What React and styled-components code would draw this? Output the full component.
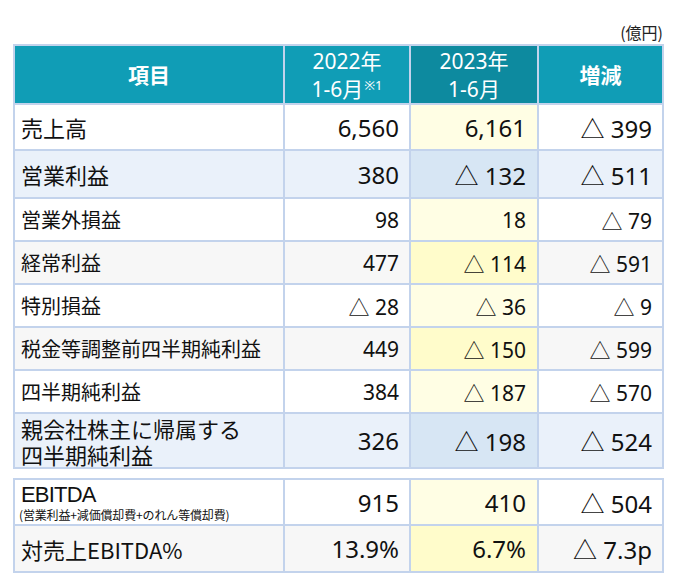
import React from "react";
import styled, { createGlobalStyle } from "styled-components";

const Global = createGlobalStyle`
  html, body { margin: 0; padding: 0; background: #fff; }
  body { font-family: "Noto Sans", "Noto Sans CJK JP", sans-serif; color: #111; }
`;

const Page = styled.div`
  width: 681px;
  height: 587px;
  box-sizing: border-box;
  padding: 21px 0 0 13px;
`;

const Unit = styled.div`
  width: 650px;
  text-align: right;
  font-size: 16px;
  line-height: 22px;
  height: 23px;
  color: #222;
  font-family: "Noto Sans CJK JP", sans-serif;
`;

const Grid = styled.div`
  display: grid;
  grid-template-columns: 268px 124px 126px 123px;
  gap: 2px;
  padding: 2px;
  width: fit-content;
  background: #c3d3ec;
  margin-bottom: ${(p) => p.$mb || 0}px;
`;

const HeadCell = styled.div`
  height: 57px;
  background: ${(p) => (p.$dark ? "#0d8a9f" : "#109db6")};
  color: #fff;
  display: flex;
  flex-direction: column;
  align-items: center;
  justify-content: center;
  text-align: center;
  font-family: "Noto Sans", "Noto Sans CJK JP", sans-serif;
  font-size: 21px;
  line-height: 28px;
  font-weight: ${(p) => (p.$bold ? 700 : 400)};
  padding-top: 1px;
  box-sizing: border-box;
`;

const Sup = styled.sup`
  font-size: 13px;
  vertical-align: 7px;
  line-height: 0;
  margin-left: 1px;
`;

const tones = {
  white: ["#ffffff", "#fffee4"],
  gray: ["#f7f7f7", "#fffccb"],
  blue: ["#eaf1fa", "#d7e6f4"],
};

const LabelCell = styled.div`
  height: ${(p) => p.$h}px;
  background: ${(p) => tones[p.$tone][0]};
  display: flex;
  flex-direction: column;
  justify-content: center;
  padding-left: 6px;
  font-family: "Noto Sans CJK JP", sans-serif;
  font-size: ${(p) => (p.$big ? 22 : 20)}px;
  line-height: ${(p) => (p.$big ? 26 : 24)}px;
  white-space: pre-line;
`;

const LabelMain = styled.span`
  line-height: 26px;
  ${(p) =>
    p.$tight &&
    `
    font-family: "Liberation Sans", "Noto Sans CJK JP", sans-serif;
    font-size: 22px;
    letter-spacing: -0.8px;
    line-height: 25px;
  `}
`;

const Note = styled.span`
  display: block;
  font-size: 12px;
  line-height: 15px;
  letter-spacing: -0.15px;
  margin-left: -2px;
  margin-bottom: 1px;
`;

const NumCell = styled.div`
  height: ${(p) => p.$h}px;
  background: ${(p) => tones[p.$tone][p.$hl ? 1 : 0]};
  display: flex;
  align-items: center;
  justify-content: flex-end;
  padding-right: ${(p) => p.$pr}px;
  font-size: ${(p) => (p.$big ? 24 : 21)}px;
  font-family: "Noto Sans", "Noto Sans CJK JP", sans-serif;
  white-space: pre;
`;

const rows = [
  { label: "売上高", v: ["6,560", "6,161", "△ 399"], tone: "white", big: true, h: 44 },
  { label: "営業利益", v: ["380", "△ 132", "△ 511"], tone: "blue", big: true, h: 46 },
  { label: "営業外損益", v: ["98", "18", "△ 79"], tone: "white", h: 41 },
  { label: "経常利益", v: ["477", "△ 114", "△ 591"], tone: "gray", h: 41 },
  { label: "特別損益", v: ["△ 28", "△ 36", "△ 9"], tone: "white", h: 41 },
  { label: "税金等調整前四半期純利益", v: ["449", "△ 150", "△ 599"], tone: "gray", h: 41 },
  { label: "四半期純利益", v: ["384", "△ 187", "△ 570"], tone: "white", h: 41 },
  { label: "親会社株主に帰属する\n四半期純利益", v: ["326", "△ 198", "△ 524"], tone: "blue", big: true, h: 53 },
];

const extra = [
  { label: "EBITDA", note: "(営業利益+減価償却費+のれん等償却費)", v: ["915", "410", "△ 504"], tone: "white", big: true, h: 44 },
  { label: "対売上EBITDA%", v: ["13.9%", "6.7%", "△ 7.3p"], tone: "gray", big: true, h: 45 },
];

const pads = [10, 11, 10];

function Row({ r }) {
  return (
    <>
      <LabelCell $h={r.h} $tone={r.tone} $big={r.big}>
        <LabelMain $tight={!!r.note}>{r.label}</LabelMain>
        {r.note && <Note>{r.note}</Note>}
      </LabelCell>
      {r.v.map((val, i) => (
        <NumCell key={i} $h={r.h} $tone={r.tone} $hl={i === 1} $big={r.big} $pr={pads[i]}>
          {val}
        </NumCell>
      ))}
    </>
  );
}

export default function App() {
  return (
    <>
      <Global />
      <Page>
        <Unit>(億円)</Unit>
        <Grid $mb={9}>
          <HeadCell $bold>項目</HeadCell>
          <HeadCell>
            <span>2022年</span>
            <span>
              1-6月<Sup>※1</Sup>
            </span>
          </HeadCell>
          <HeadCell $dark>
            <span>2023年</span>
            <span>1-6月</span>
          </HeadCell>
          <HeadCell $bold>増減</HeadCell>
          {rows.map((r) => (
            <Row key={r.label} r={r} />
          ))}
        </Grid>
        <Grid>
          {extra.map((r) => (
            <Row key={r.label} r={r} />
          ))}
        </Grid>
      </Page>
    </>
  );
}
